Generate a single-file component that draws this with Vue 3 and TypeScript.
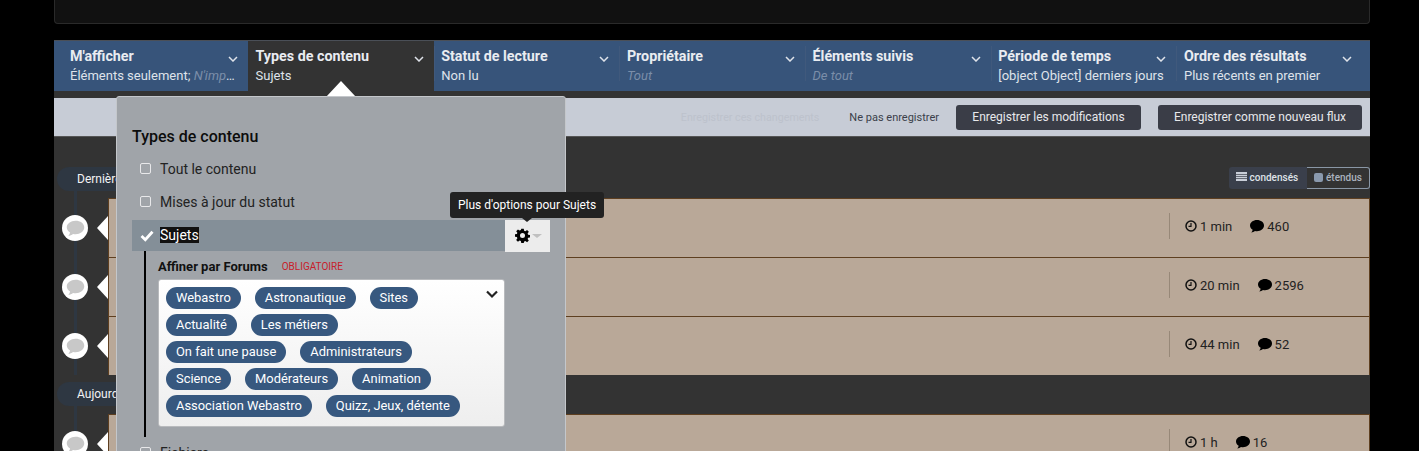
<script setup lang="ts">
interface Tab { title: string; value?: string; muted?: string; active?: boolean }
interface Row { time: string; count: string }
const tabs: Tab[] = [
  { title: "M'afficher", value: 'Éléments seulement; ', muted: "N'importe qui" },
  { title: 'Types de contenu', value: 'Sujets', active: true },
  { title: 'Statut de lecture', value: 'Non lu' },
  { title: 'Propriétaire', muted: 'Tout' },
  { title: 'Éléments suivis', muted: 'De tout' },
  { title: 'Période de temps', value: '[object Object] derniers jours' },
  { title: 'Ordre des résultats', value: 'Plus récents en premier' },
]
const recent: Row[] = [
  { time: '1 min', count: '460' },
  { time: '20 min', count: '2596' },
  { time: '44 min', count: '52' },
]
const today: Row[] = [{ time: '1 h', count: '16' }]
const forums: string[][] = [
  ['Webastro', 'Astronautique', 'Sites'],
  ['Actualité', 'Les métiers'],
  ['On fait une pause', 'Administrateurs'],
  ['Science', 'Modérateurs', 'Animation'],
  ['Association Webastro', 'Quizz, Jeux, détente'],
]
const groups = [
  { label: 'Dernière heure', rows: recent },
  { label: "Aujourd'hui", rows: today },
]
const bubble = 'M12 3C6.5 3 2 6.4 2 10.6c0 2.4 1.5 4.5 3.8 5.9-.2 1.4-.9 2.7-2 3.9 2-.2 3.9-1 5.4-2.2.9.2 1.8.3 2.8.3 5.5 0 10-3.4 10-7.9S17.500 3 12 3z'
</script>

<template>
  <div class="page">
    <div class="top-panel"></div>
    <div class="stream">
      <nav class="filters">
        <div v-for="t in tabs" :key="t.title" class="tab" :class="{ active: t.active }">
          <div class="tab-text">
            <div class="tab-title">{{ t.title }}</div>
            <div class="tab-value">{{ t.value }}<em v-if="t.muted">{{ t.muted }}</em></div>
          </div>
          <svg class="tab-caret" width="10" height="6" viewBox="0 0 10 6"><path d="M1 1l4 4 4-4" fill="none" stroke="currentColor" stroke-width="1.500" /></svg>
        </div>
      </nav>
      <div class="savebar">
        <span class="save-ghost">Enregistrer ces changements</span>
        <span class="save-no">Ne pas enregistrer</span>
        <button class="btn btn-a">Enregistrer les modifications</button>
        <button class="btn btn-b">Enregistrer comme nouveau flux</button>
      </div>
      <div class="body">
        <div class="toggle">
          <span class="toggle-on">
            <svg width="11" height="9" viewBox="0 0 11 9"><path d="M0 0h11v9H0z" fill="#c9ced8" /><path d="M0 2.500h11M0 4.500h11M0 6.500h11" stroke="#3a3f4b" stroke-width=".7" /></svg>
            condensés
          </span>
          <span class="toggle-off"><i class="sq"></i>étendus</span>
        </div>
        <section v-for="g in groups" :key="g.label" class="group">
          <div class="pill">{{ g.label }}</div>
          <div v-for="r in g.rows" :key="r.time" class="row">
            <div class="avatar">
              <svg viewBox="0 0 24 24"><path :d="bubble" fill="#c8c8c8" /></svg>
            </div>
            <span class="notch"></span>
            <div class="card">
              <div class="stats">
                <span class="stat">
                  <svg width="12" height="12" viewBox="0 0 12 12"><circle cx="6" cy="6" r="5" fill="none" stroke="#111" stroke-width="1.500" /><path d="M6 3v3.300H3.500" fill="none" stroke="#111" stroke-width="1.200" /></svg>
                  {{ r.time }}
                </span>
                <span class="stat">
                  <svg width="14" height="13" viewBox="2 3 20 18" preserveAspectRatio="none"><path :d="bubble" fill="#000" /></svg>
                  {{ r.count }}
                </span>
              </div>
            </div>
          </div>
        </section>
      </div>
    </div>

    <div class="pop-arrow"></div>
    <div class="popover">
      <h3>Types de contenu</h3>
      <div class="opt"><i class="check"></i>Tout le contenu</div>
      <div class="opt"><i class="check"></i>Mises à jour du statut</div>
      <div class="opt-on">
        <svg class="tick" width="14" height="12" viewBox="0 0 14 12"><path d="M1.500 6l3.800 3.800 7.200-8" fill="none" stroke="#fff" stroke-width="2.800" /></svg>
        <span class="sel">Sujets</span>
        <span class="gear-box">
          <svg width="15" height="15" viewBox="0 0 24 24"><path fill-rule="evenodd" d="M10 1h4l.6 3.200 2 .8L19.300 3.200l2.800 2.800L20.200 8.600l.8 2L24 11v4l-3 .4-.8 2 1.900 2.600-2.800 2.800-2.700-1.900-2 .8L14 23.900h-4l-.6-3.200-2-.8-2.700 1.900L1.900 19l1.900-2.600-.8-2L0 14v-4l3-.4.8-2L1.900 5l2.800-2.800 2.700 1.900 2-.8zM12 8a4 4 0 100 8 4 4 0 000-8z" fill="#000" /></svg>
          <i class="gear-caret"></i>
        </span>
      </div>
      <div class="refine">
        <div class="refine-head"><b>Affiner par Forums</b><span>OBLIGATOIRE</span></div>
        <div class="select">
          <svg class="select-caret" width="12" height="9" viewBox="0 0 12 9"><path d="M1 1.500l5 5 5-5" fill="none" stroke="#222" stroke-width="2.200" /></svg>
          <div v-for="(line, i) in forums" :key="i" class="tag-line">
            <span v-for="f in line" :key="f" class="tag">{{ f }}</span>
          </div>
        </div>
      </div>
      <div class="opt opt-last"><i class="check"></i>Fichiers</div>
    </div>
    <div class="tooltip">Plus d'options pour Sujets<i></i></div>
  </div>
</template>

<style>
html, body { margin: 0; background: #000; overflow: hidden; }
</style>

<style scoped>
.page {
  position: relative;
  height: 451px;
  overflow: hidden;
  padding: 0 49px 0 54px;
  background: #000;
  font-family: Roboto, "Liberation Sans", sans-serif;
  color: #111;
  box-sizing: border-box;
}
.top-panel {
  height: 24px;
  margin-bottom: 16px;
  box-sizing: border-box;
  background: #111;
  border: 1px solid #2a2a2a;
  border-top: 0;
  border-radius: 0 0 4px 4px;
}
.stream { background: #333; border-top: 1px solid #4a4f57; height: 411px; overflow: hidden; box-sizing: border-box; }
.filters { display: flex; height: 50px; padding: 0 8px 0 1px; background: #37547a; }
.tab {
  position: relative;
  flex: 0 0 185.7px;
  box-sizing: border-box;
  display: flex;
  align-items: flex-start;
  padding: 7px 10px 0 7.500px;
  color: #fff;
  min-width: 0;
}
.tab:first-child { flex-basis: 193px; padding-left: 15px; }
.tab + .tab:not(.active)::before {
  content: '';
  position: absolute;
  left: 0;
  top: 5px;
  bottom: 10px;
  width: 1px;
  background: #40597c;
}
.tab.active { background: #333; }
.tab:first-child .tab-value { width: 165px; overflow: hidden; text-overflow: ellipsis; white-space: nowrap; }
.tab-text { flex: 1; min-width: 0; }
.tab-title { font-size: 14.300px; line-height: 17px; font-weight: 700; color: #e9ecf1; white-space: nowrap; }
.tab-value { font-size: 13px; line-height: 19px; margin-top: 1px; color: #dfe3ea; white-space: nowrap; }
.tab-value em { color: #7b8ea9; }
.tab-caret { position: absolute; right: 10px; top: 15px; color: #dfe3ea; }
.savebar {
  margin-top: 7px;
  height: 39px;
  box-sizing: border-box;
  display: flex;
  align-items: center;
  justify-content: flex-end;
  padding: 0 8px 0 0;
  background: #c7ccd6;
  border-bottom: 1px solid #555;
  font-size: 11px;
}
.save-ghost { color: #bdc2cc; margin-right: 30px; font-size: 10.700px; }
.save-no { color: #3b3f4a; margin-right: 17px; }
.btn {
  height: 25px;
  padding: 0;
  border: 0;
  border-radius: 3px;
  background: #3a3d47;
  color: #e8e9ec;
  font: 12px Roboto, sans-serif;
}
.btn-a { width: 185px; margin-right: 17px; }
.btn-b { width: 204px; }
.body { position: relative; padding: 30px 0 0 3px; }
.toggle {
  position: absolute;
  right: 0;
  top: 30px;
  display: flex;
  height: 22px;
  font-size: 10px;
  font-weight: 500;
  line-height: 22px;
}
.toggle-on {
  width: 78px;
  box-sizing: border-box;
  padding-left: 7px;
  background: #3a3f4b;
  border-radius: 3px 0 0 3px;
  color: #dfe2e8;
  white-space: nowrap;
}
.toggle-off {
  width: 63px;
  box-sizing: border-box;
  padding-left: 7px;
  border: 1px solid #8a97a6;
  border-left: 0;
  border-radius: 0 3px 3px 0;
  line-height: 20px;
  color: #aab2bd;
  white-space: nowrap;
}
.sq { display: inline-block; width: 9px; height: 9px; margin-right: 3px; background: #8a99ad; border-radius: 2px; vertical-align: -1px; }
.group { position: relative; }
.group + .group { margin-top: 7px; }
.group + .group .pill { margin-bottom: 8px; }
.pill {
  width: 120px;
  height: 24px;
  box-sizing: border-box;
  padding-left: 20px;
  margin-bottom: 7px;
  background: #2e3742;
  border-radius: 12px;
  color: #f2f3f5;
  font-size: 12px;
  line-height: 24px;
}
.row { position: relative; height: 59px; padding-left: 51px; }
.row::before {
  content: '';
  position: absolute;
  left: 17px;
  top: -8px;
  bottom: 0;
  width: 3px;
  background: #2e3742;
}
.avatar {
  position: absolute;
  left: 5px;
  top: 17px;
  width: 26px;
  height: 26px;
  border-radius: 50%;
  background: #fff;
  display: flex;
  align-items: center;
  justify-content: center;
}
.avatar svg { width: 21px; height: 21px; }
.notch {
  position: absolute;
  left: 40px;
  top: 18px;
  width: 0;
  height: 0;
  border: 12px solid transparent;
  border-left: 0;
  border-right: 11px solid #fff;
  z-index: 1;
}
.card {
  position: relative;
  height: 59px;
  box-sizing: border-box;
  background: #b9a898;
  border-top: 1px solid #5e3f20;
  border-left: 1px solid #5e3f20;
  border-right: 1px solid #5e3f20;
}
.stats {
  position: absolute;
  left: 1060px;
  top: 14px;
  height: 26px;
  display: flex;
  align-items: center;
  gap: 18px;
  padding-left: 15px;
  border-left: 1px solid #978878;
  font-size: 13px;
  white-space: nowrap;
}
.stat { display: inline-flex; align-items: center; gap: 3px; color: #222; }
.pop-arrow {
  position: absolute;
  left: 326px;
  top: 81px;
  width: 0;
  height: 0;
  border: 15px solid transparent;
  border-top: 0;
  border-bottom: 16px solid #fff;
}
.popover {
  position: absolute;
  left: 116px;
  top: 96px;
  width: 450px;
  height: 400px;
  box-sizing: border-box;
  padding: 30px 15px 0;
  background: #a0a4a9;
  border: 1px solid #c4c7cb;
  border-radius: 3px;
}
h3 { margin: 0; font-size: 16px; line-height: 20px; font-weight: 500; color: #0c0c0c; }
.opt {
  display: flex;
  align-items: center;
  height: 33px;
  padding-left: 8px;
  font-size: 14px;
  color: #222;
}
h3 + .opt { margin-top: 5px; }
.check {
  width: 9px;
  height: 9px;
  margin-right: 9px;
  border: 1px solid #e8e8ea;
  border-radius: 2px;
}
.opt-on {
  position: relative;
  display: flex;
  align-items: center;
  height: 31px;
  margin-top: 2px;
  padding-left: 8px;
  background: #848f98;
  font-size: 14px;
}
.tick { margin-right: 6px; }
.sel { background: #111; color: #fff; padding: 0; line-height: 16px; margin-bottom: 2px; }
.gear-box {
  position: absolute;
  right: 0;
  top: 0;
  width: 45px;
  height: 32px;
  background: #ececec;
  display: flex;
  align-items: center;
  padding: 0 0 2px 10px;
  box-sizing: border-box;
}
.gear-caret {
  margin-left: 2px;
  margin-top: 2px;
  width: 0;
  height: 0;
  border: 5px solid transparent;
  border-top: 4px solid #c0c0c0;
  border-bottom: 0;
}
.refine { margin-left: 12px; padding: 6px 0 0 12px; border-left: 2px solid #000; height: 186px; box-sizing: border-box; width: 361px; }
.refine-head { display: flex; align-items: center; gap: 14px; height: 19px; }
.refine-head b { font-size: 13px; font-weight: 700; color: #111; }
.refine-head span { font-size: 10px; color: #c8202a; }
.select {
  position: relative;
  margin-top: 3px;
  width: 347px;
  height: 148px;
  box-sizing: border-box;
  padding: 7px 0 0 7px;
  background: linear-gradient(#fff, #eee);
  border: 1px solid #b8babd;
  border-radius: 3px;
}
.select-caret { position: absolute; right: 6px; top: 10px; }
.tag-line { display: flex; gap: 14px; margin-bottom: 5px; }
.tag {
  height: 22px;
  padding: 0 10px;
  background: #37587f;
  color: #fff;
  border-radius: 11px;
  font-size: 12.900px;
  line-height: 22px;
  white-space: nowrap;
}
.opt-last { margin-top: -1px; }
.tooltip {
  position: absolute;
  left: 450px;
  top: 192px;
  width: 154px;
  height: 26px;
  background: #222;
  border-radius: 3px;
  color: #fff;
  font-size: 12px;
  line-height: 26px;
  text-align: center;
  white-space: nowrap;
}
.tooltip i {
  position: absolute;
  left: 72px;
  top: 26px;
  width: 0;
  height: 0;
  border: 5px solid transparent;
  border-top: 4px solid #222;
  border-bottom: 0;
}
</style>
